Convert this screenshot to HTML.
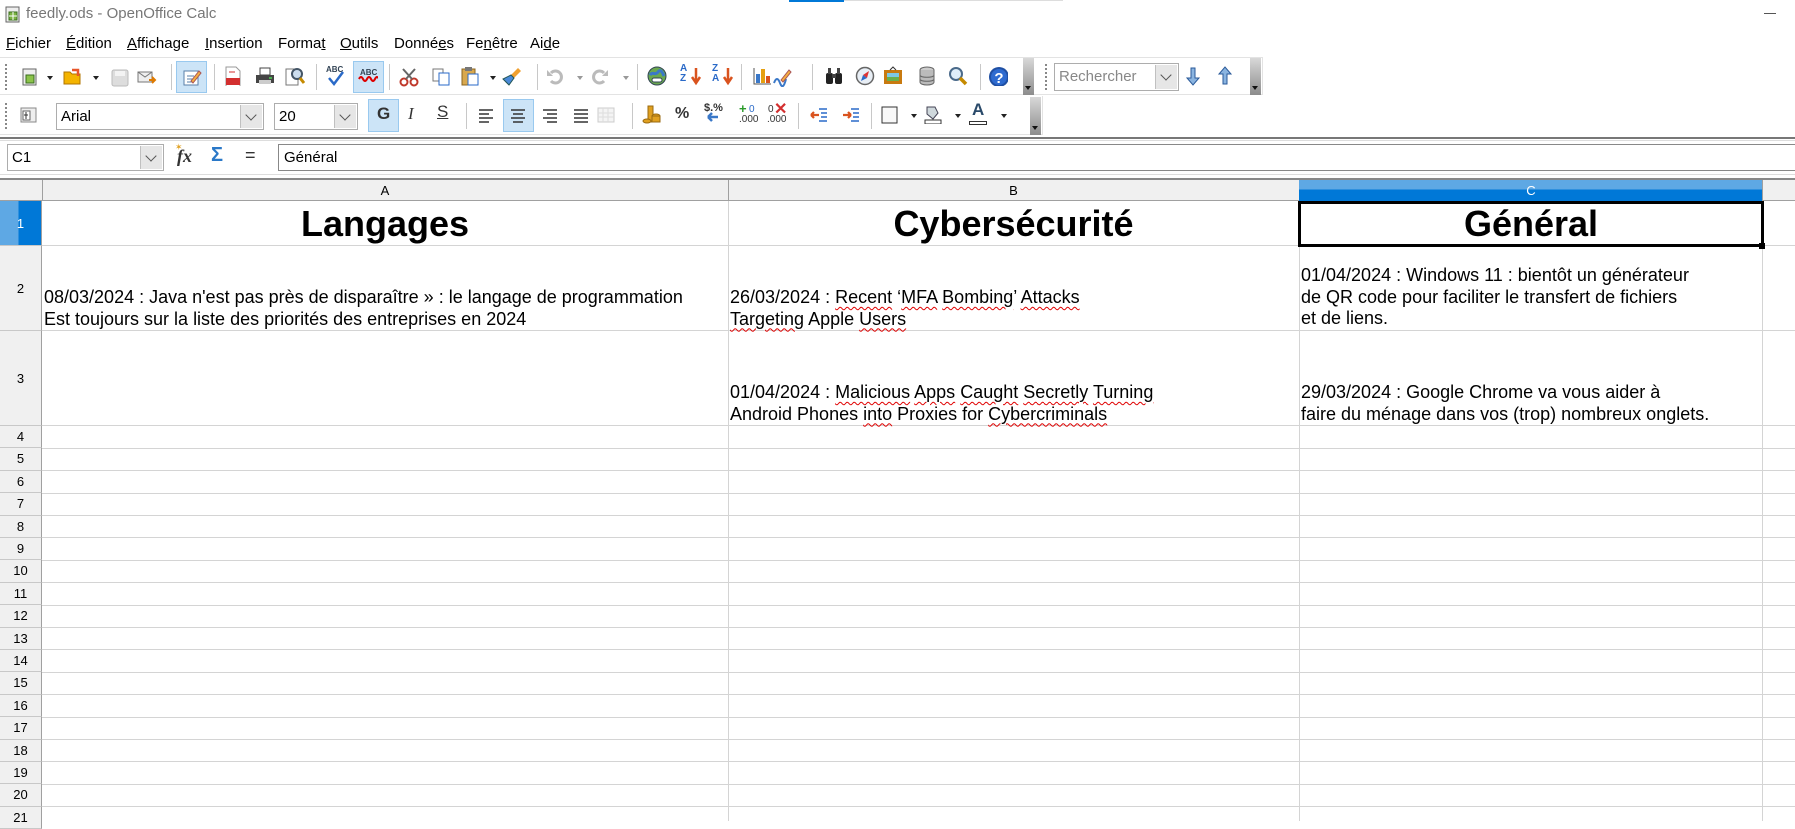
<!DOCTYPE html>
<html><head><meta charset="utf-8">
<style>
*{margin:0;padding:0;box-sizing:border-box}
body{width:1795px;height:821px;overflow:hidden;background:#fff;font-family:"Liberation Sans",Arial,sans-serif;position:relative;color:#000}
.a{position:absolute}
.ui{font-size:15px;color:#000}
.ic{position:absolute;width:20px;height:20px}
.sep{position:absolute;width:1px;background:#c8c8c8}
.dd{position:absolute;width:0;height:0;border-left:3px solid transparent;border-right:3px solid transparent;border-top:4px solid #222}
.hl{position:absolute;background:#cce4f7;border:1px solid #99c9ef}
.cell{position:absolute;font-size:18px;line-height:21.5px;white-space:nowrap;padding-left:2px}
.sp{text-decoration:underline wavy #e00000;text-decoration-thickness:1px;text-underline-offset:3px}
.rh{position:absolute;left:0;width:42px;background:#f0f0f0;border-right:1px solid #a0a0a0;border-bottom:1px solid #c8c8c8;font-size:13px;text-align:center}
.hline{position:absolute;left:42px;width:1753px;height:1px;background:#d4d4d4}
.vline{position:absolute;top:201px;width:1px;height:620px;background:#d4d4d4}
.box{position:absolute;border:1px solid #adadad;background:#fff;font-size:15px}
.btn{position:absolute;top:1px;right:1px;bottom:1px;width:22px;background:#e6e6e6;border-left:1px solid #c0c0c0}
.btn:after{content:"";position:absolute;left:6px;top:6px;width:7px;height:7px;border-right:1.5px solid #555;border-bottom:1.5px solid #555;transform:rotate(45deg)}
.hand{position:absolute;width:11px;background:linear-gradient(#d8d8d8,#8c8c8c)}
.grip{position:absolute;width:2px;background:repeating-linear-gradient(#888 0 2px,transparent 2px 4px)}
</style></head><body>

<!-- title bar -->
<svg class="a" style="left:4px;top:4px" width="18" height="20"><rect x="2" y="3" width="13" height="15" fill="#eee" stroke="#666"/><rect x="5" y="8" width="8" height="8" fill="#7cb342" stroke="#3a6d1f"/><line x1="9" y1="8" x2="9" y2="16" stroke="#fff"/><line x1="5" y1="12" x2="13" y2="12" stroke="#fff"/></svg>
<div class="a" style="left:26px;top:5px;font-size:15px;color:#777">feedly.ods - OpenOffice Calc</div>
<div class="a" style="left:789px;top:0;width:55px;height:2px;background:#0078d7"></div>
<div class="a" style="left:844px;top:0;width:219px;height:1px;background:#ddd"></div>
<div class="a" style="left:1764px;top:13px;width:12px;height:1px;background:#555"></div>

<!-- menu -->
<div class="a ui" style="top:35px;left:6px;word-spacing:0">
<span class="a" style="left:0"><u>F</u>ichier</span>
<span class="a" style="left:60px"><u>É</u>dition</span>
<span class="a" style="left:121px"><u>A</u>ffichage</span>
<span class="a" style="left:199px"><u>I</u>nsertion</span>
<span class="a" style="left:272px;white-space:nowrap">Forma<u>t</u></span>
<span class="a" style="left:334px"><u>O</u>utils</span>
<span class="a" style="left:388px;white-space:nowrap">Donné<u>e</u>s</span>
<span class="a" style="left:460px;white-space:nowrap">Fe<u>n</u>être</span>
<span class="a" style="left:524px">Ai<u>d</u>e</span>
</div>

<!-- toolbar 1 -->
<div class="a" style="left:0;top:57px;width:1263px;height:38px;border-top:1px solid #e3e3e3;border-bottom:1px solid #e3e3e3;border-right:1px solid #e3e3e3"></div>
<div class="grip" style="left:5px;top:64px;height:26px"></div>
<svg class="ic" style="left:20px;top:67px"><rect x="3" y="2" width="13" height="16" fill="#eee" stroke="#666"/><rect x="6" y="8" width="8" height="8" fill="#8bc34a" stroke="#3a6d1f"/></svg>
<div class="dd" style="left:47px;top:76px"></div>
<svg class="ic" style="left:62px;top:66px"><path d="M2 6h6l2 2h8v10H2z" fill="#f4b400" stroke="#b07400"/><path d="M10 4l6 0 0 6" stroke="#e8562a" stroke-width="2.5" fill="none"/></svg>
<div class="dd" style="left:93px;top:76px"></div>
<svg class="ic" style="left:110px;top:68px"><rect x="2" y="2" width="16" height="16" rx="2" fill="#ddd" stroke="#bbb"/><rect x="5" y="3" width="10" height="5" fill="#f3f3f3"/></svg>
<svg class="ic" style="left:137px;top:68px"><rect x="1" y="4" width="14" height="10" fill="#eee" stroke="#777"/><path d="M1 4l7 5 7-5" stroke="#777" fill="none"/><path d="M12 12h6m-3-3l3 3-3 3" stroke="#e07b00" stroke-width="2" fill="none"/></svg>
<div class="sep" style="left:171px;top:64px;height:26px"></div>
<div class="hl" style="left:176px;top:61px;width:31px;height:32px"></div>
<svg class="ic" style="left:182px;top:67px"><rect x="2" y="4" width="14" height="14" fill="#fff" stroke="#5a7fa8"/><path d="M5 9h7M5 12h7M5 15h5" stroke="#5a7fa8"/><path d="M9 14l8-10 2 2-8 10z" fill="#f5b041" stroke="#a55"/></svg>
<div class="sep" style="left:214px;top:64px;height:26px"></div>
<svg class="ic" style="left:223px;top:66px"><path d="M3 1h10l4 4v16H3z" fill="#fff" stroke="#999"/><rect x="3" y="12" width="14" height="7" fill="#d32f2f"/><path d="M6 6h6" stroke="#d32f2f"/></svg>
<svg class="ic" style="left:255px;top:67px"><rect x="5" y="1" width="10" height="7" fill="#fff" stroke="#444"/><rect x="1" y="8" width="18" height="8" fill="#444"/><rect x="4" y="13" width="12" height="4" fill="#ccc"/><rect x="14" y="10" width="3" height="2" fill="#4caf50"/></svg>
<svg class="ic" style="left:285px;top:66px"><rect x="1" y="3" width="12" height="16" fill="#fff" stroke="#777"/><circle cx="12" cy="8" r="5" fill="#cde" stroke="#456" stroke-width="2"/><path d="M15 12l4 5" stroke="#c58a00" stroke-width="3"/></svg>
<div class="sep" style="left:316px;top:64px;height:26px"></div>
<div class="a" style="left:326px;top:65px;font-size:8px;font-weight:bold;color:#345">ABC</div>
<svg class="ic" style="left:326px;top:70px"><path d="M3 8l5 6 9-12" stroke="#2a6ac8" stroke-width="2.5" fill="none"/></svg>
<div class="hl" style="left:353px;top:61px;width:31px;height:32px"></div>
<div class="a" style="left:360px;top:68px;font-size:8px;font-weight:bold;color:#345">ABC</div>
<svg class="ic" style="left:358px;top:74px" height="10"><path d="M1 5q2-4 4 0t4 0 4 0 4 0 4 0" stroke="#d00" stroke-width="2" fill="none"/></svg>
<div class="sep" style="left:389px;top:64px;height:26px"></div>
<svg class="ic" style="left:399px;top:67px"><circle cx="5" cy="15" r="3.5" fill="none" stroke="#c0392b" stroke-width="2"/><circle cx="15" cy="15" r="3.5" fill="none" stroke="#c0392b" stroke-width="2"/><path d="M7 12L16 2M13 12L4 2" stroke="#666" stroke-width="2"/></svg>
<svg class="ic" style="left:431px;top:67px"><rect x="2" y="2" width="10" height="12" fill="#fff" stroke="#777"/><rect x="8" y="6" width="10" height="12" fill="#fff" stroke="#2a6ac8"/></svg>
<svg class="ic" style="left:460px;top:66px"><rect x="2" y="3" width="13" height="16" fill="#d8a84e" stroke="#8a6420"/><rect x="5" y="1" width="7" height="4" fill="#777"/><rect x="8" y="8" width="10" height="11" fill="#fff" stroke="#2a6ac8"/></svg>
<div class="dd" style="left:490px;top:76px"></div>
<svg class="ic" style="left:502px;top:66px"><path d="M16 2l3 3-7 7-3-3z" fill="#f0a030"/><path d="M9 9l3 3-5 7-6-6z" fill="#4a8ad8" stroke="#255"/></svg>
<div class="sep" style="left:537px;top:64px;height:26px"></div>
<svg class="ic" style="left:545px;top:67px"><path d="M6 6a6 6 0 1 1 0 8" stroke="#bbb" stroke-width="3" fill="none"/><path d="M2 3v6h6" fill="#bbb"/></svg>
<div class="dd" style="left:577px;top:76px;border-top-color:#999"></div>
<svg class="ic" style="left:590px;top:67px"><path d="M14 6a6 6 0 1 0 0 8" stroke="#bbb" stroke-width="3" fill="none"/><path d="M18 3v6h-6" fill="#bbb"/></svg>
<div class="dd" style="left:623px;top:76px;border-top-color:#999"></div>
<div class="sep" style="left:637px;top:64px;height:26px"></div>
<svg class="ic" style="left:647px;top:66px"><circle cx="10" cy="10" r="9" fill="#6aa84f" stroke="#345"/><path d="M3 9c3-4 5 1 8-3s5 2 6 4" stroke="#3a78c8" stroke-width="3" fill="none"/><rect x="5" y="12" width="10" height="4" rx="2" fill="#fff" stroke="#345"/></svg>
<div class="a" style="left:680px;top:64px;font-size:10px;font-weight:bold;color:#2a6ac8;line-height:10px">A<br>Z</div>
<svg class="ic" style="left:684px;top:66px"><path d="M12 2v14m-4-5l4 6 4-6" stroke="#d9531e" stroke-width="2.5" fill="none"/></svg>
<div class="a" style="left:712px;top:64px;font-size:10px;font-weight:bold;color:#2a6ac8;line-height:10px">Z<br>A</div>
<svg class="ic" style="left:716px;top:66px"><path d="M12 2v14m-4-5l4 6 4-6" stroke="#d9531e" stroke-width="2.5" fill="none"/></svg>
<div class="sep" style="left:741px;top:64px;height:26px"></div>
<svg class="ic" style="left:752px;top:66px"><path d="M2 2v16h17" stroke="#555" fill="none"/><rect x="4" y="8" width="4" height="9" fill="#3a78c8"/><rect x="9" y="3" width="4" height="14" fill="#e6a010"/><rect x="14" y="10" width="4" height="7" fill="#d9531e"/></svg>
<svg class="ic" style="left:772px;top:67px"><path d="M2 16q3-8 6 0t6-4" stroke="#3a78c8" stroke-width="2" fill="none"/><path d="M9 13l8-10 2 2-8 10z" fill="#f5b041" stroke="#a55"/></svg>
<div class="sep" style="left:812px;top:64px;height:26px"></div>
<svg class="ic" style="left:824px;top:66px"><rect x="2" y="7" width="7" height="11" rx="2" fill="#222"/><rect x="11" y="7" width="7" height="11" rx="2" fill="#222"/><rect x="4" y="2" width="3" height="6" fill="#444"/><rect x="13" y="2" width="3" height="6" fill="#444"/><rect x="8" y="8" width="4" height="4" fill="#444"/></svg>
<svg class="ic" style="left:855px;top:66px"><circle cx="10" cy="10" r="8.5" fill="#e8eef5" stroke="#666" stroke-width="1.5"/><path d="M14 5l-6 4 4 3z" fill="#d33"/><path d="M6 15l2-6 4 3z" fill="#2a6ac8"/></svg>
<svg class="ic" style="left:883px;top:66px"><rect x="1" y="4" width="18" height="14" fill="#c87a10"/><rect x="4" y="7" width="12" height="8" fill="#6ab04c"/><rect x="4" y="7" width="12" height="4" fill="#7ec8e3"/><path d="M7 4l3-3 3 3" stroke="#333" fill="none"/></svg>
<svg class="ic" style="left:917px;top:66px"><ellipse cx="10" cy="4" rx="7" ry="3" fill="#ccc" stroke="#666"/><path d="M3 4v12c0 4 14 4 14 0V4" fill="#bbb" stroke="#666"/><path d="M3 9c0 3 14 3 14 0M3 13c0 3 14 3 14 0" stroke="#666" fill="none"/></svg>
<svg class="ic" style="left:948px;top:66px"><circle cx="8" cy="8" r="6" fill="#dfeefa" stroke="#4a6a8a" stroke-width="2"/><path d="M12 12l6 6" stroke="#c58a00" stroke-width="3.5"/></svg>
<div class="sep" style="left:980px;top:64px;height:26px"></div>
<svg class="ic" style="left:988px;top:66px" width="22" height="22"><circle cx="11" cy="11" r="10" fill="#1f4fa3"/><circle cx="11" cy="11" r="8" fill="#2e6bd0"/><text x="11" y="17" font-size="15" font-weight="bold" text-anchor="middle" fill="#fff" font-family="Liberation Sans">?</text></svg>
<div class="hand" style="left:1023px;top:58px;height:37px"></div>
<div class="dd" style="left:1025px;top:86px;border-top-color:#111"></div>
<div class="grip" style="left:1045px;top:64px;height:26px"></div>
<div class="box" style="left:1054px;top:63px;width:125px;height:28px;color:#888;padding:4px 0 0 4px">Rechercher<div class="btn"></div></div>
<svg class="ic" style="left:1183px;top:66px"><path d="M8 2h4v10h4l-6 7-6-7h4z" fill="#8ab4e0" stroke="#2a5a9a"/></svg>
<svg class="ic" style="left:1215px;top:66px"><path d="M8 18h4V8h4l-6-7-6 7h4z" fill="#8ab4e0" stroke="#2a5a9a"/></svg>
<div class="hand" style="left:1250px;top:58px;height:37px"></div>
<div class="dd" style="left:1252px;top:86px;border-top-color:#111"></div>

<!-- toolbar 2 -->
<div class="a" style="left:0;top:96px;width:1043px;height:39px;border-bottom:1px solid #e3e3e3;border-right:1px solid #e3e3e3"></div>
<div class="grip" style="left:5px;top:103px;height:26px"></div>
<svg class="ic" style="left:18px;top:105px"><rect x="3" y="3" width="15" height="14" fill="#eee" stroke="#888"/><rect x="5" y="6" width="7" height="9" fill="#fff" stroke="#666"/><path d="M8 7v7M6 10h4" stroke="#333"/></svg>
<div class="box" style="left:56px;top:103px;width:208px;height:27px;padding:4px 0 0 4px">Arial<div class="btn"></div></div>
<div class="box" style="left:274px;top:103px;width:84px;height:27px;padding:4px 0 0 4px">20<div class="btn"></div></div>
<div class="hl" style="left:368px;top:99px;width:31px;height:33px"></div>
<div class="a" style="left:377px;top:104px;font-size:17px;font-weight:bold;color:#333">G</div>
<div class="a" style="left:408px;top:104px;font-size:17px;font-style:italic;color:#333;font-family:'Liberation Serif',serif">I</div>
<div class="a" style="left:437px;top:102px;font-size:17px;color:#333;text-decoration:underline">S</div>
<div class="sep" style="left:466px;top:103px;height:26px"></div>
<svg class="ic" style="left:476px;top:105px"><path d="M3 5h14M3 9h10M3 13h14M3 17h10" stroke="#333" stroke-width="1.5"/></svg>
<div class="hl" style="left:503px;top:99px;width:31px;height:33px"></div>
<svg class="ic" style="left:508px;top:105px"><path d="M3 5h14M5 9h10M3 13h14M5 17h10" stroke="#333" stroke-width="1.5"/></svg>
<svg class="ic" style="left:540px;top:105px"><path d="M3 5h14M7 9h10M3 13h14M7 17h10" stroke="#333" stroke-width="1.5"/></svg>
<svg class="ic" style="left:571px;top:105px"><path d="M3 5h14M3 9h14M3 13h14M3 17h14" stroke="#333" stroke-width="1.5"/></svg>
<svg class="ic" style="left:596px;top:105px"><rect x="2" y="3" width="16" height="14" fill="#f4f4f4" stroke="#ccc"/><path d="M2 8h16M2 12h16M7 3v14M12 3v14" stroke="#ddd"/></svg>
<div class="sep" style="left:632px;top:103px;height:26px"></div>
<svg class="ic" style="left:642px;top:104px"><rect x="6" y="2" width="5" height="16" fill="#e0a020" stroke="#9a6a10"/><ellipse cx="14" cy="12" rx="4" ry="2" fill="#e0a020" stroke="#9a6a10"/><rect x="10" y="12" width="8" height="6" fill="#e0a020" stroke="#9a6a10"/><ellipse cx="5" cy="17" rx="4" ry="2" fill="#e0a020" stroke="#9a6a10"/></svg>
<div class="a" style="left:675px;top:105px;font-size:16px;font-weight:bold;color:#333">%</div>
<div class="a" style="left:704px;top:102px;font-size:11px;font-weight:bold;color:#333">$.%</div>
<svg class="ic" style="left:704px;top:110px" height="14"><path d="M4 7h10M4 7l4-4M4 7l4 4" stroke="#3a78c8" stroke-width="2.5" fill="none"/></svg>
<div class="a" style="left:739px;top:101px;font-size:13px;font-weight:bold;color:#2a9a2a">+</div>
<div class="a" style="left:749px;top:104px;font-size:10px;color:#2a6ac8">0</div>
<div class="a" style="left:739px;top:114px;font-size:10px;color:#333">.000</div>
<div class="a" style="left:768px;top:104px;font-size:10px;color:#333">0</div>
<div class="a" style="left:774px;top:99px;font-size:16px;font-weight:bold;color:#d32f2f">✕</div>
<div class="a" style="left:767px;top:114px;font-size:10px;color:#333">.000</div>
<div class="sep" style="left:798px;top:103px;height:26px"></div>
<svg class="ic" style="left:809px;top:105px"><path d="M10 4h8M12 8h6M12 12h6M10 16h8" stroke="#2a6ac8" stroke-width="1.5"/><path d="M2 10h8M2 10l3-3M2 10l3 3" stroke="#d9531e" stroke-width="2.2" fill="none"/></svg>
<svg class="ic" style="left:841px;top:105px"><path d="M10 4h8M12 8h6M12 12h6M10 16h8" stroke="#2a6ac8" stroke-width="1.5"/><path d="M2 10h8M10 10l-3-3M10 10l-3 3" stroke="#d9531e" stroke-width="2.2" fill="none"/></svg>
<div class="sep" style="left:871px;top:103px;height:26px"></div>
<svg class="ic" style="left:880px;top:105px"><rect x="2" y="2" width="15" height="16" fill="#f8f8f8" stroke="#333"/></svg>
<div class="dd" style="left:911px;top:114px"></div>
<svg class="ic" style="left:923px;top:104px"><path d="M4 3l8 0 3 6-5 6-6-5z" fill="#cfd8dc" stroke="#445"/><rect x="2" y="16" width="16" height="4" fill="#fff" stroke="#333"/></svg>
<div class="dd" style="left:955px;top:114px"></div>
<div class="a" style="left:972px;top:100px;font-size:17px;font-weight:bold;color:#2a4a6a">A</div>
<div class="a" style="left:969px;top:121px;width:18px;height:4px;background:#fff;border:1px solid #333"></div>
<div class="dd" style="left:1001px;top:114px"></div>
<div class="hand" style="left:1030px;top:97px;height:38px"></div>
<div class="dd" style="left:1032px;top:126px;border-top-color:#111"></div>

<!-- formula bar -->
<div class="a" style="left:0;top:137px;width:1795px;height:2px;background:#777"></div>
<div class="a" style="left:0;top:140px;width:1795px;height:1px;background:#ddd"></div>
<div class="box" style="left:7px;top:144px;width:157px;height:27px;padding:4px 0 0 4px">C1<div class="btn"></div></div>
<div class="a" style="left:177px;top:146px;font-size:18px;font-style:italic;font-weight:bold;font-family:'Liberation Serif',serif;color:#333">fx</div>
<div class="a" style="left:175px;top:142px;font-size:9px;color:#e0a020">✶</div>
<div class="a" style="left:211px;top:144px;font-size:20px;font-weight:bold;color:#2a78c8">Σ</div>
<div class="a" style="left:245px;top:145px;font-size:18px;color:#333">=</div>
<div class="a" style="left:278px;top:144px;width:1517px;height:27px;border:1px solid #888;border-right:none;font-size:15px;padding:4px 0 0 5px">Général</div>
<div class="a" style="left:0;top:174px;width:1795px;height:1px;background:#ddd"></div>
<div class="a" style="left:0;top:178px;width:1795px;height:2px;background:#888"></div>

<!-- column headers -->
<div class="a" style="left:0;top:180px;width:1795px;height:21px;background:#f0f0f0;border-bottom:1px solid #a0a0a0"></div>
<div class="a" style="left:42px;top:180px;width:1px;height:21px;background:#a0a0a0"></div>
<div class="a" style="left:728px;top:180px;width:1px;height:21px;background:#a0a0a0"></div>
<div class="a" style="left:1299px;top:180px;width:464px;height:21px;background:linear-gradient(#5ea8e4 0 45%,#0078d7 45%);color:#fff;text-align:center;font-size:13px;line-height:21px">C</div>
<div class="a" style="left:1762px;top:180px;width:1px;height:21px;background:#a0a0a0"></div>
<div class="a" style="left:42px;top:180px;width:686px;text-align:center;font-size:13px;line-height:21px">A</div>
<div class="a" style="left:728px;top:180px;width:571px;text-align:center;font-size:13px;line-height:21px">B</div>

<!-- row headers -->
<div class="rh" style="top:201px;height:45px;background:linear-gradient(90deg,#5ea8e4 0 45%,#0078d7 45%);color:#fff;line-height:45px">1</div>
<div class="rh" style="top:246px;height:85px;line-height:85px">2</div>
<div class="rh" style="top:331px;height:95px;line-height:95px">3</div>
<div class="rh" style="top:426px;height:22.4px;line-height:22px">4</div>
<div class="rh" style="top:448.4px;height:22.4px;line-height:22px">5</div>
<div class="rh" style="top:470.8px;height:22.4px;line-height:22px">6</div>
<div class="rh" style="top:493.2px;height:22.4px;line-height:22px">7</div>
<div class="rh" style="top:515.6px;height:22.4px;line-height:22px">8</div>
<div class="rh" style="top:538px;height:22.4px;line-height:22px">9</div>
<div class="rh" style="top:560.4px;height:22.4px;line-height:22px">10</div>
<div class="rh" style="top:582.8px;height:22.4px;line-height:22px">11</div>
<div class="rh" style="top:605.2px;height:22.4px;line-height:22px">12</div>
<div class="rh" style="top:627.6px;height:22.4px;line-height:22px">13</div>
<div class="rh" style="top:650px;height:22.4px;line-height:22px">14</div>
<div class="rh" style="top:672.4px;height:22.4px;line-height:22px">15</div>
<div class="rh" style="top:694.8px;height:22.4px;line-height:22px">16</div>
<div class="rh" style="top:717.2px;height:22.4px;line-height:22px">17</div>
<div class="rh" style="top:739.6px;height:22.4px;line-height:22px">18</div>
<div class="rh" style="top:762px;height:22.4px;line-height:22px">19</div>
<div class="rh" style="top:784.4px;height:22.4px;line-height:22px">20</div>
<div class="rh" style="top:806.8px;height:22.4px;line-height:22px">21</div>

<!-- grid lines -->
<div class="hline" style="top:245px"></div>
<div class="hline" style="top:330px"></div>
<div class="hline" style="top:425px"></div>
<div class="hline" style="top:448px"></div>
<div class="hline" style="top:470px"></div>
<div class="hline" style="top:493px"></div>
<div class="hline" style="top:515px"></div>
<div class="hline" style="top:537px"></div>
<div class="hline" style="top:560px"></div>
<div class="hline" style="top:582px"></div>
<div class="hline" style="top:605px"></div>
<div class="hline" style="top:627px"></div>
<div class="hline" style="top:649px"></div>
<div class="hline" style="top:672px"></div>
<div class="hline" style="top:694px"></div>
<div class="hline" style="top:717px"></div>
<div class="hline" style="top:739px"></div>
<div class="hline" style="top:761px"></div>
<div class="hline" style="top:784px"></div>
<div class="hline" style="top:806px"></div>
<div class="vline" style="left:728px"></div>
<div class="vline" style="left:1299px"></div>
<div class="vline" style="left:1762px"></div>

<!-- row 1 -->
<div class="a" style="left:42px;top:201px;width:686px;height:45px;text-align:center;font-size:36px;font-weight:bold;line-height:46px">Langages</div>
<div class="a" style="left:728px;top:201px;width:571px;height:45px;text-align:center;font-size:36px;font-weight:bold;line-height:46px">Cybersécurité</div>
<div class="a" style="left:1298px;top:201px;width:466px;height:46px;border:3px solid #000"></div>
<div class="a" style="left:1299px;top:201px;width:464px;height:45px;text-align:center;font-size:36px;font-weight:bold;line-height:46px">Général</div>
<div class="a" style="left:1759px;top:243px;width:6px;height:6px;background:#000"></div>

<!-- row 2 -->
<div class="cell" style="left:42px;top:287px">08/03/2024 : Java n'est pas près de disparaître » : le langage de programmation<br>Est toujours sur la liste des priorités des entreprises en 2024</div>
<div class="cell" style="left:728px;top:287px">26/03/2024 : <span class="sp">Recent</span> ‘<span class="sp">MFA</span> <span class="sp">Bombing</span>’ <span class="sp">Attacks</span><br><span class="sp">Targeting</span> Apple <span class="sp">Users</span></div>
<div class="cell" style="left:1299px;top:265px">01/04/2024 : Windows 11 : bientôt un générateur<br>de QR code pour faciliter le transfert de fichiers<br>et de liens.</div>

<!-- row 3 -->
<div class="cell" style="left:728px;top:382px">01/04/2024 : <span class="sp">Malicious</span> <span class="sp">Apps</span> <span class="sp">Caught</span> <span class="sp">Secretly</span> <span class="sp">Turning</span><br>Android Phones <span class="sp">into</span> Proxies for <span class="sp">Cybercriminals</span></div>
<div class="cell" style="left:1299px;top:382px">29/03/2024 : Google Chrome va vous aider à<br>faire du ménage dans vos (trop) nombreux onglets.</div>

</body></html>
